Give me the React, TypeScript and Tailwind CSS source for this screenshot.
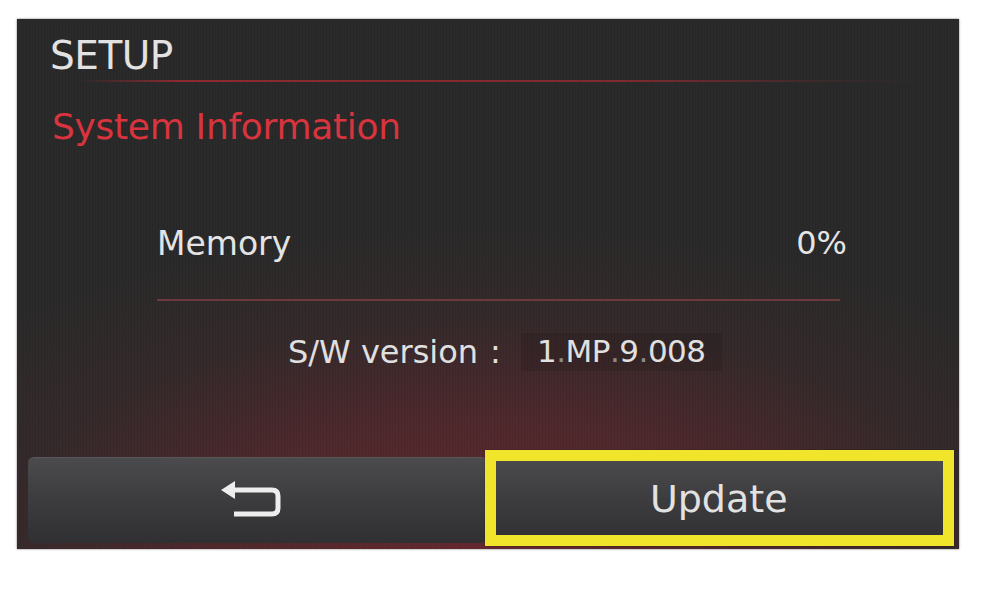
import { useState } from "react";

function BackIcon() {
  return (
    <svg width="60" height="40" viewBox="0 0 60 40" fill="none">
      <polygon points="0,11 14,2 14,20" fill="#ededed" />
      <path
        d="M12 11 H51 Q57 11 57 17 V29 Q57 35 51 35 H13"
        stroke="#ededed"
        strokeWidth="5"
        strokeLinejoin="round"
      />
    </svg>
  );
}

export default function App() {
  const [selected] = useState("update");

  return (
    <div className="min-h-screen w-full bg-white pt-[19px] pl-[17px] font-['DejaVu_Sans',sans-serif]">
      {/* screen */}
      <div className="w-[942px] h-[530px] flex flex-col shadow-[0_0_2px_rgba(0,0,0,0.55)] bg-[repeating-linear-gradient(90deg,rgba(0,0,0,0.07)_0px,rgba(0,0,0,0.07)_1px,transparent_1px,transparent_3px),radial-gradient(ellipse_75%_62%_at_50%_100%,#66292f_0%,#4d292d_42%,#352a2b_70%,#2a2a2a_100%)] bg-[#2a2a2a]">
        {/* title */}
        <div className="h-[61px] pt-[11px] pl-[33px] flex items-center">
          <span className="text-[39px] leading-none text-[#e2e2e2] tracking-[-0.5px]">SETUP</span>
        </div>
        <div className="h-[2px] ml-[60px] mr-[36px] bg-[linear-gradient(90deg,transparent_0%,#8c2a30_12%,#7e2a2f_65%,#3c2a2c_88%,transparent_100%)]" />

        {/* section */}
        <div className="h-[90px] pl-[35px] flex items-center">
          <span className="text-[36px] leading-none text-[#d8343e] tracking-[-0.3px]">System Information</span>
        </div>

        {/* memory */}
        <div className="ml-[140px] mr-[112px] mt-[41px]">
          <div className="h-[60px] flex items-center justify-between">
            <span className="text-[33px] leading-none text-[#e4e4e4]">Memory</span>
            <span className="text-[32px] leading-none text-[#e4e4e4]">0%</span>
          </div>
          <div className="mt-[26px] mr-[7px] h-[2px] bg-[#6c3a3d]" />
        </div>

        {/* version */}
        <div className="h-[101px] pl-[271px] flex items-center">
          <span className="text-[32px] leading-none text-[#e0e0e0]">S/W version</span>
          <span className="ml-[12px] text-[32px] leading-none text-[#e0e0e0]">:</span>
          <span className="ml-[20px] px-[16px] h-[38px] flex items-center bg-black/10 text-[31px] leading-none text-[#e0e0e0] tracking-[-0.5px]">
            1<span className="text-[#8a8a8a]">.</span>MP<span className="text-[#8a8a8a]">.</span>9<span className="text-[#8a8a8a]">.</span>008
          </span>
        </div>

        <div className="flex-1" />

        {/* buttons */}
        <div className="grid grid-cols-2 gap-[3px] px-[11px] pb-[6px]">
          <button className="h-[86px] rounded-[6px] flex items-center justify-center pr-[12px] pb-[4px] border-t border-[#58585a] bg-[linear-gradient(180deg,#4b4a4c_0%,#3c3b3d_50%,#303032_100%)]">
            <BackIcon />
          </button>
          <div className="relative">
            <button className="w-full h-[86px] rounded-[6px] flex items-center justify-center pb-[4px] border-t border-[#58585a] bg-[linear-gradient(180deg,#4b4a4c_0%,#3c3b3d_50%,#303032_100%)]">
              <span className="text-[38px] leading-none text-[#e2e2e2]">Update</span>
            </button>
            {selected === "update" && (
              <div className="absolute -top-[7px] -bottom-[3px] -left-[5px] -right-[6px] border-[11px] border-[#f0e52a] shadow-[0_0_1px_rgba(0,0,0,0.6)] pointer-events-none" />
            )}
          </div>
        </div>
      </div>
    </div>
  );
}
